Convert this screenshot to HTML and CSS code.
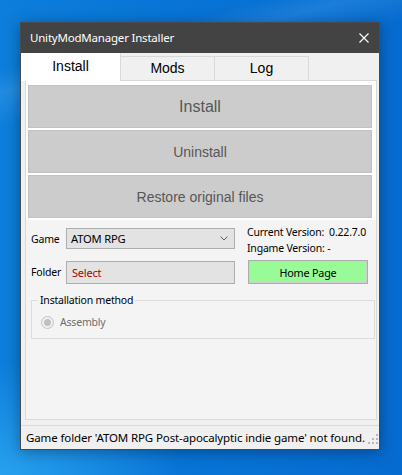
FILE: index.html
```html
<!DOCTYPE html>
<html lang="en">
<head>
<meta charset="utf-8">
<title>UnityModManager Installer</title>
<link rel="stylesheet" href="styles.css">
</head>
<body>
<div class="window">
  <div class="titlebar">
    <span class="title">UnityModManager Installer</span>
    <svg class="close" width="10" height="10" viewBox="0 0 10 10" aria-label="Close">
      <path d="M0.5 0.5 L9.5 9.5 M9.5 0.5 L0.5 9.5" stroke="#ffffff" stroke-width="1.1" fill="none"/>
    </svg>
  </div>
  <div class="client">
    <div class="tabs">
      <div class="tab active">Install</div>
      <div class="tab">Mods</div>
      <div class="tab">Log</div>
    </div>
    <div class="tabpage">
      <div class="actions">
        <button class="action primary" disabled>Install</button>
        <button class="action" disabled>Uninstall</button>
        <button class="action" disabled>Restore original files</button>
      </div>
      <div class="settings">
        <div class="form-grid">
          <label class="field-label">Game</label>
          <div class="combo">
            <span>ATOM RPG</span>
            <svg class="chevron" width="8" height="5" viewBox="0 0 8 5">
              <path d="M0.5 0.5 L4 4 L7.5 0.5" stroke="#606060" stroke-width="1" fill="none"/>
            </svg>
          </div>
          <div class="versions">
            <div>Current Version:&nbsp; 0.22.7.0</div>
            <div>Ingame Version: -</div>
          </div>
          <label class="field-label">Folder</label>
          <div class="textbox">Select</div>
          <div class="home-cell"><button class="home">Home Page</button></div>
        </div>
        <fieldset class="group">
          <legend>Installation method</legend>
          <div class="radio-row">
            <span class="radio"><span class="dot"></span></span>
            <span class="radio-label">Assembly</span>
          </div>
        </fieldset>
      </div>
    </div>
    <div class="statusbar">
      <span class="status-text">Game folder 'ATOM RPG Post-apocalyptic indie game' not found.</span>
      <svg class="grip" width="10" height="10" viewBox="0 0 10 10">
        <g fill="#b8b8b8">
          <rect x="8" y="0" width="2" height="2"/>
          <rect x="4" y="4" width="2" height="2"/>
          <rect x="8" y="4" width="2" height="2"/>
          <rect x="0" y="8" width="2" height="2"/>
          <rect x="4" y="8" width="2" height="2"/>
          <rect x="8" y="8" width="2" height="2"/>
        </g>
      </svg>
    </div>
  </div>
</div>
</body>
</html>
```
FILE: styles.css
```css
* {
  box-sizing: border-box;
}

html,
body {
  margin: 0;
}

body {
  width: 402px;
  height: 475px;
  overflow: hidden;
  padding: 22px 0 0 20px;
  font-family: "Noto Sans", "Open Sans", sans-serif;
  font-size: 11.5px;
  letter-spacing: -0.2px;
  color: #000;
  background:
    radial-gradient(ellipse 240px 150px at 0% 100%, rgba(60, 190, 255, 0.55), rgba(60, 190, 255, 0) 75%),
    linear-gradient(165deg, rgba(255, 255, 255, 0) 12%, rgba(140, 210, 255, 0.16) 16%, rgba(255, 255, 255, 0) 22%),
    linear-gradient(90deg, #0d7edb 0%, #0874d6 45%, #066bd0 100%);
}

/* ---------- window frame ---------- */
.window {
  width: 360px;
  height: 428px;
  border: 1px solid #4a4a4a;
  background: #f0f0f0;
  display: flex;
  flex-direction: column;
  box-shadow: 0 2px 14px rgba(0, 0, 0, 0.35);
}

.titlebar {
  flex: none;
  height: 30px;
  background: #434343;
  color: #fff;
  display: flex;
  align-items: center;
  justify-content: space-between;
  padding: 0 10px 0 9px;
}

.title {
  line-height: 16px;
}

.client {
  flex: 1;
  display: flex;
  flex-direction: column;
}

/* ---------- tab strip ---------- */
.tabs {
  flex: none;
  height: 27px;
  display: flex;
  align-items: flex-end;
}

.tab {
  height: 24px;
  width: 95px;
  margin-left: -1px;
  border: 1px solid #d9d9d9;
  border-bottom: none;
  background: #f0f0f0;
  font-family: "Liberation Sans", Arial, sans-serif;
  font-size: 14px;
  letter-spacing: 0;
  line-height: 23px;
  text-align: center;
}

.tab.active {
  position: relative;
  z-index: 1;
  margin-left: 0;
  width: 100px;
  height: 28px;
  margin-bottom: -1px;
  border-left: none;
  border-top: none;
  background: #fff;
  line-height: 27px;
}

/* ---------- tab page ---------- */
.tabpage {
  flex: none;
  width: 352px;
  height: 340px;
  margin-left: 4px;
  border: 1px solid #d9d9d9;
  background: #f4f4f4;
  display: flex;
  flex-direction: column;
}

.actions {
  background: #fff;
  padding: 4px 4px 2px 2px;
  display: flex;
  flex-direction: column;
  gap: 2px;
}

.action {
  height: 43px;
  margin: 0;
  border: 1px solid #c2c2c2;
  background: #cccccc;
  color: #575757;
  font-family: "Liberation Sans", Arial, sans-serif;
  font-size: 14px;
  letter-spacing: 0;
}

.action.primary {
  font-size: 16px;
}

.settings {
  flex: 1;
  padding: 4px 0 0 5px;
  font-size: 10.5px;
  letter-spacing: -0.2px;
}

.form-grid {
  display: grid;
  grid-template-columns: 35px 169px 133px;
  row-gap: 4px;
  align-items: center;
}

.field-label {
  line-height: 16px;
}

.form-grid > .field-label:first-child {
  align-self: start;
  margin-top: 7px;
}

.combo {
  align-self: start;
  margin-top: 4px;
  height: 21px;
  border: 1px solid #adadad;
  background: #e3e3e3;
  display: flex;
  align-items: center;
  justify-content: space-between;
  padding: 0 6px 0 4px;
  font-size: 11.2px;
}

.chevron {
  display: block;
}

.versions {
  padding-left: 12px;
  line-height: 16px;
  white-space: nowrap;
}

.textbox {
  height: 23px;
  border: 1px solid #adadad;
  background: #e3e3e3;
  color: #b00000;
  padding-left: 5px;
  line-height: 21px;
  font-size: 11px;
}

.home-cell {
  padding-left: 13px;
}

.home {
  display: block;
  width: 120px;
  height: 24px;
  margin: 0;
  border: 1px solid #adadad;
  box-shadow: inset 0 0 0 1px #cfcfcf;
  background: #98fb98;
  color: #000;
  font-family: "Noto Sans", "Open Sans", sans-serif;
  font-size: 10.8px;
  letter-spacing: -0.2px;
  padding: 0;
}

/* ---------- group box ---------- */
.group {
  width: 344px;
  margin: 8px 0 0 0;
  padding: 0 6px 8px 6px;
  border: 1px solid #dcdcdc;
}

.group legend {
  padding: 0 2px;
  line-height: 16px;
}

.radio-row {
  margin-top: 6px;
  height: 16px;
  display: flex;
  align-items: center;
  gap: 6px;
  padding-left: 3px;
}

.radio {
  width: 13px;
  height: 13px;
  border-radius: 50%;
  border: 1px solid #c4c4c4;
  background: #f0f0f0;
  display: flex;
  align-items: center;
  justify-content: center;
}

.dot {
  width: 7px;
  height: 7px;
  border-radius: 50%;
  background: #c0c0c0;
}

.radio-label {
  color: #6d6d6d;
  line-height: 16px;
}

/* ---------- status bar ---------- */
.statusbar {
  flex: none;
  height: 24px;
  margin-top: 5px;
  border-top: 1px solid #dadada;
  display: flex;
  align-items: center;
  padding: 0 1px 0 5px;
}

.status-text {
  flex: 1;
  min-width: 0;
  white-space: nowrap;
  line-height: 16px;
  letter-spacing: -0.12px;
}

.grip {
  flex: none;
  align-self: flex-end;
  margin-bottom: 5px;
}
```
